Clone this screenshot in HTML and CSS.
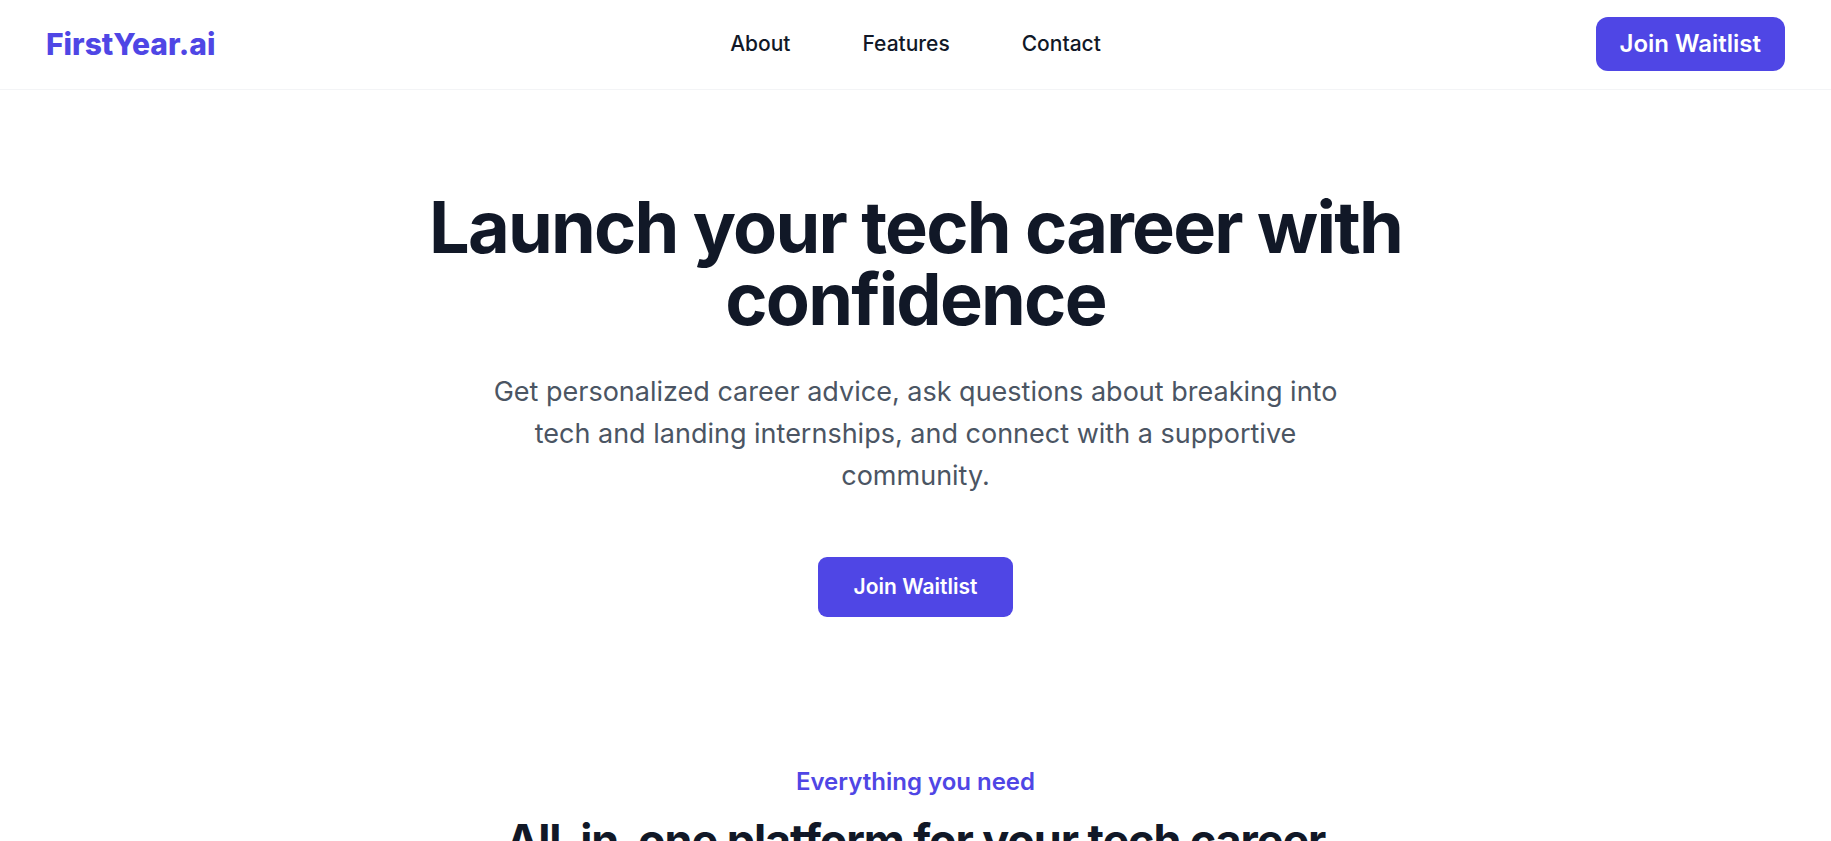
FILE: index.html
```html
<!DOCTYPE html>
<html lang="en">
<head>
<meta charset="utf-8">
<title>FirstYear.ai</title>
<link rel="stylesheet" href="styles.css">
</head>
<body>
<header class="header">
  <a class="logo" href="#">FirstYear.ai</a>
  <nav class="nav">
    <a class="nav-link" href="#about">About</a>
    <a class="nav-link" href="#features">Features</a>
    <a class="nav-link" href="#contact">Contact</a>
  </nav>
  <div class="header-action"><button class="button button-header" type="button">Join Waitlist</button></div>
</header>
<main>
  <section class="hero" id="about">
    <h1 class="hero-title">Launch your tech career with confidence</h1>
    <p class="hero-text">Get personalized career advice, ask questions about breaking into tech and landing internships, and connect with a supportive community.</p>
    <button class="button button-hero" type="button">Join Waitlist</button>
  </section>
  <section class="features" id="features">
    <p class="eyebrow">Everything you need</p>
    <h2 class="features-title">All-in-one platform for your tech career</h2>
  </section>
</main>
</body>
</html>
```
FILE: styles.css
```css
* { box-sizing: border-box; }
html { scrollbar-width: none; }
body {
  margin: 0;
  background: #fff;
  color: #111827;
  font-family: Inter, sans-serif;
}
a { text-decoration: none; }
h1, h2, p { margin: 0; }
.header {
  display: grid;
  grid-template-columns: 1fr auto 1fr;
  align-items: center;
  padding: 17px 46px 18px;
  border-bottom: 1px solid #f3f4f6;
}
.logo { color: #4f46e5; font-size: 30px; font-weight: 800; line-height: 36px; }
.nav { display: flex; gap: 72px; }
.nav-link { color: #111827; font-size: 21px; font-weight: 500; line-height: 30px; }
.header-action { display: flex; justify-content: flex-end; }
.button {
  border: 0;
  background: #4f46e5;
  color: #fff;
  font-family: inherit;
  cursor: pointer;
}
.button-header {
  padding: 12px 24px;
  border-radius: 12px;
  font-size: 24px;
  font-weight: 600;
  line-height: 30px;
}
.button-hero {
  margin-top: 60px;
  padding: 15px 36px;
  border-radius: 9px;
  font-size: 21px;
  font-weight: 600;
  line-height: 30px;
}
.hero {
  max-width: 1008px;
  margin: 0 auto;
  padding: 101px 0 147px;
  text-align: center;
}
.hero-title {
  font-size: 72px;
  font-weight: 700;
  line-height: 72px;
  letter-spacing: -0.025em;
}
.hero-text {
  max-width: 864px;
  margin: 36px auto 0;
  color: #4b5563;
  font-size: 27px;
  line-height: 42px;
}
.features { text-align: center; }
.eyebrow {
  color: #4f46e5;
  font-size: 24px;
  font-weight: 600;
  line-height: 36px;
}
.features-title {
  margin-top: 12px;
  font-size: 45px;
  font-weight: 700;
  line-height: 58px;
  letter-spacing: -0.025em;
}
```
